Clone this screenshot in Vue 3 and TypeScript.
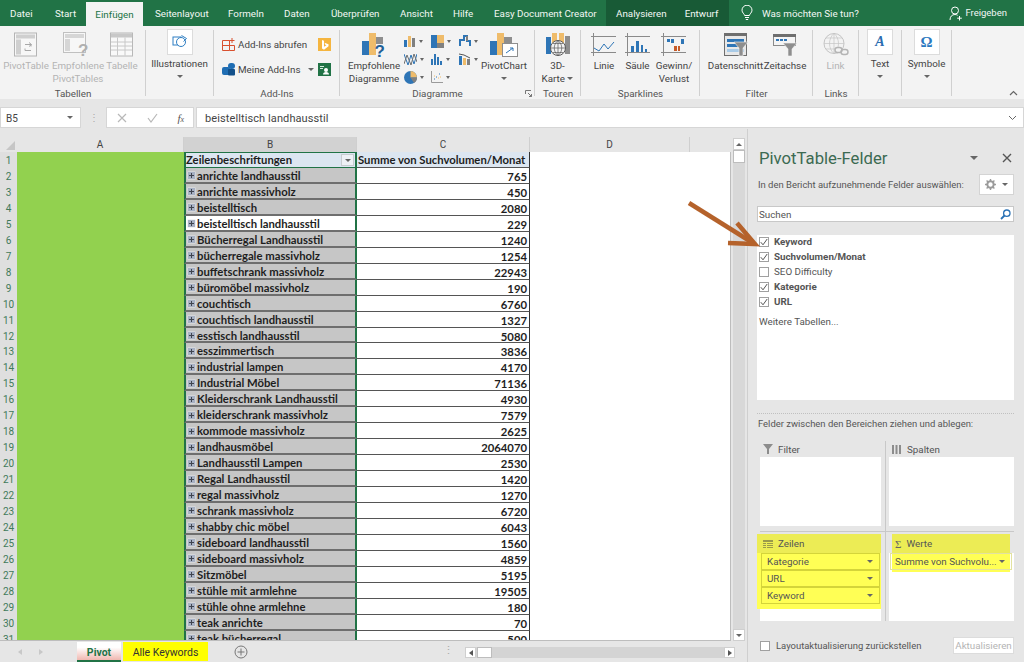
<script setup lang="ts">
interface PivotRow {
  label: string
  value: number
}

const rows: PivotRow[] = [
  { label: "anrichte landhausstil", value: 765 },
  { label: "anrichte massivholz", value: 450 },
  { label: "beistelltisch", value: 2080 },
  { label: "beistelltisch landhausstil", value: 229 },
  { label: "Bücherregal Landhausstil", value: 1240 },
  { label: "bücherregale massivholz", value: 1254 },
  { label: "buffetschrank massivholz", value: 22943 },
  { label: "büromöbel massivholz", value: 190 },
  { label: "couchtisch", value: 6760 },
  { label: "couchtisch landhausstil", value: 1327 },
  { label: "esstisch landhausstil", value: 5080 },
  { label: "esszimmertisch", value: 3836 },
  { label: "industrial lampen", value: 4170 },
  { label: "Industrial Möbel", value: 71136 },
  { label: "Kleiderschrank Landhausstil", value: 4930 },
  { label: "kleiderschrank massivholz", value: 7579 },
  { label: "kommode massivholz", value: 2625 },
  { label: "landhausmöbel", value: 2064070 },
  { label: "Landhausstil Lampen", value: 2530 },
  { label: "Regal Landhausstil", value: 1420 },
  { label: "regal massivholz", value: 1270 },
  { label: "schrank massivholz", value: 6720 },
  { label: "shabby chic möbel", value: 6043 },
  { label: "sideboard landhausstil", value: 1560 },
  { label: "sideboard massivholz", value: 4859 },
  { label: "Sitzmöbel", value: 5195 },
  { label: "stühle mit armlehne", value: 19505 },
  { label: "stühle ohne armlehne", value: 180 },
  { label: "teak anrichte", value: 70 },
  { label: "teak bücherregal", value: 500 },
]

const selectedRow = 5

const tabs = [
  { name: "Datei", cls: "t-datei" },
  { name: "Start", cls: "t-start" },
  { name: "Einfügen", cls: "t-active" },
  { name: "Seitenlayout", cls: "t-seiten" },
  { name: "Formeln", cls: "t-formeln" },
  { name: "Daten", cls: "t-daten" },
  { name: "Überprüfen", cls: "t-ueber" },
  { name: "Ansicht", cls: "t-ansicht" },
  { name: "Hilfe", cls: "t-hilfe" },
  { name: "Easy Document Creator", cls: "t-easy" },
]

const fields = [
  { name: "Keyword", checked: true },
  { name: "Suchvolumen/Monat", checked: true },
  { name: "SEO Difficulty", checked: false },
  { name: "Kategorie", checked: true },
  { name: "URL", checked: true },
]

const rowFields = ["Kategorie", "URL", "Keyword"]
</script>

<template>
  <div class="app">
    <!-- tab strip -->
    <div class="tabbar">
      <div v-for="t in tabs" :key="t.name" class="tab" :class="t.cls">{{ t.name }}</div>
      <div class="context-tabs">
        <span>Analysieren</span>
        <span>Entwurf</span>
      </div>
      <svg class="bulb" width="12" height="16" viewBox="0 0 12 16" fill="none" stroke="#fff" stroke-width="1">
        <path d="M3.6 10.5C3.4 8.8 1 7.8 1 5.2a5 5 0 0 1 10 0c0 2.6-2.4 3.6-2.6 5.3z" />
        <path d="M4 12.500h4M4.800 14.500h2.400" />
      </svg>
      <span class="tell-me">Was möchten Sie tun?</span>
      <div class="share">
        <svg width="14" height="15" viewBox="0 0 14 15" fill="none" stroke="#fff" stroke-width="1">
          <circle cx="6" cy="4.500" r="3.500" />
          <path d="M1 14c0-3.500 2-5.500 5-5.500 1 0 2 .3 2.600 .8M10.500 10v4.500M8.200 12.200h4.600" />
        </svg>
        <span>Freigeben</span>
      </div>
    </div>

    <!-- ribbon -->
    <div class="ribbon">
      <section class="group g-tabellen">
        <div class="group-body">
          <div class="big off w-pivot">
            <svg class="ico" width="24" height="25" viewBox="0 0 24 25">
              <rect x=".5" y=".5" width="22" height="23" fill="#f7f7f7" stroke="#b4b4b4" />
              <rect x="2" y="2" width="19" height="4" fill="#cfcfcf" />
              <rect x="2" y="7" width="5" height="15" fill="#cfcfcf" />
              <path d="M11 12h6v2M17 18h-6v-2M15 10l2.500 2-2.500 2" fill="none" stroke="#a8a8a8" />
            </svg>
            <span>PivotTable</span>
          </div>
          <div class="big off w-empf">
            <svg class="ico tall" width="30" height="32" viewBox="0 0 30 32">
              <rect x=".5" y=".5" width="22" height="20" fill="#f7f7f7" stroke="#c0c0c0" />
              <rect x="2" y="2" width="19" height="4" fill="#d6d6d6" />
              <rect x="2" y="7" width="5" height="12" fill="#d6d6d6" />
              <text x="15" y="24" class="ico-q">?</text>
            </svg>
            <span>Empfohlene<br />PivotTables</span>
          </div>
          <div class="big off w-tabelle">
            <svg class="ico" width="24" height="25" viewBox="0 0 24 25">
              <rect x=".5" y=".5" width="22" height="23" fill="#f9f9f9" stroke="#b8b8b8" />
              <rect x="1" y="1" width="21" height="4" fill="#c8c8c8" />
              <path d="M1 9.500h21M1 13.500h21M1 17.500h21M7.500 5v18M15 5v18" stroke="#c8c8c8" />
            </svg>
            <span>Tabelle</span>
          </div>
        </div>
        <div class="group-label">Tabellen</div>
      </section>

      <section class="group g-illu">
        <div class="group-body">
          <div class="boxed">
            <div class="white-box">
              <svg width="16" height="16" viewBox="0 0 16 16" fill="none" stroke="#2f7fc4" stroke-width="1">
                <rect x="1" y="3" width="8" height="8" />
                <circle cx="9" cy="8" r="4.500" fill="#ffffff" />
                <path d="M9.500 1.500l5 3-3 3" />
              </svg>
            </div>
            <span>Illustrationen</span>
            <i class="caret"></i>
          </div>
        </div>
      </section>

      <section class="group g-addins">
        <div class="group-body addins">
          <div class="addin-row">
            <svg width="14" height="13" viewBox="0 0 14 13" fill="none" stroke="#d9502e" stroke-width="1">
              <path d="M.5 2.500h7v10h-7zM.5 7.500h12v5h-5M7.500 2.500v5M10 0v5M7.500 2.500h5" />
            </svg>
            <span class="addin-text">Add-Ins abrufen</span>
            <div class="store bing">
              <svg width="8" height="10" viewBox="0 0 8 10"><path d="M1 0l2 .7v6l2.500-1.400-1.200-.6-.8-1.900 4 1.400v2L3 9.800 1 8.500z" fill="#fff" /></svg>
            </div>
          </div>
          <div class="addin-row">
            <svg width="14" height="13" viewBox="0 0 14 13">
              <rect x="6" y="0" width="7" height="6" rx="3" fill="#1f6db3" />
              <rect x="0" y="4" width="8" height="8" rx="2" fill="#1f6db3" />
              <rect x="6" y="6" width="7" height="6.500" rx="1" fill="#12508a" />
            </svg>
            <span class="addin-text">Meine Add-Ins</span>
            <i class="caret mini-caret"></i>
            <div class="store people">
              <svg width="9" height="10" viewBox="0 0 9 10">
                <path d="M0 1.500h4M0 3.500h3" stroke="#d8ecdf" />
                <circle cx="6" cy="5" r="2" fill="#fff" />
                <path d="M3 9.500a3 2.500 0 0 1 6 0z" fill="#fff" />
              </svg>
            </div>
          </div>
        </div>
        <div class="group-label">Add-Ins</div>
      </section>

      <section class="group g-charts">
        <div class="group-body">
          <div class="big w-empf-chart">
            <svg class="ico tall" width="27" height="32" viewBox="0 0 27 32">
              <rect x="1" y="9" width="7" height="14" fill="#2e75b6" />
              <rect x="8" y="1" width="7" height="22" fill="#efbc6b" />
              <rect x="15" y="5" width="7" height="7" fill="#8e8e8e" />
              <text x="13.500" y="25" class="ico-qb">?</text>
            </svg>
            <span>Empfohlene<br />Diagramme</span>
          </div>
          <div class="chart-grid">
            <div class="mini">
              <svg width="12" height="11" viewBox="0 0 12 11">
                <rect x="0" y="4" width="3" height="7" fill="#2e75b6" />
                <rect x="4" y="0" width="3" height="11" fill="#efbc6b" />
                <rect x="8" y="2" width="3" height="9" fill="#808080" />
              </svg>
              <i class="caret"></i>
            </div>
            <div class="mini">
              <svg width="13" height="13" viewBox="0 0 13 13">
                <rect x="0" y="0" width="6" height="13" fill="#2e75b6" />
                <rect x="6" y="0" width="7" height="8" fill="#efbc6b" />
                <rect x="6" y="8" width="7" height="5" fill="#808080" />
              </svg>
              <i class="caret"></i>
            </div>
            <div class="mini">
              <svg width="12" height="12" viewBox="0 0 12 12" fill="none">
                <path d="M1 11V5h4V1h3v5h3v5" stroke="#2e75b6" stroke-width="2" />
                <path d="M8 1v5" stroke="#808080" stroke-width="2" />
              </svg>
              <i class="caret"></i>
            </div>
            <div class="mini">
              <svg width="13" height="13" viewBox="0 0 13 13" fill="none" stroke-width="1">
                <path d="M0 1l4 11 3-10 3 9 3-10" stroke="#2e75b6" />
                <path d="M0 11l3-9 4 10 3-11 3 8" stroke="#707070" />
              </svg>
              <i class="caret"></i>
            </div>
            <div class="mini">
              <svg width="12" height="11" viewBox="0 0 12 11" fill="#2e75b6">
                <rect x="0" y="5" width="2" height="6" />
                <rect x="3" y="0" width="2" height="11" />
                <rect x="6" y="3" width="2" height="8" />
                <rect x="9" y="7" width="2" height="4" />
              </svg>
              <i class="caret"></i>
            </div>
            <div class="mini">
              <svg width="12" height="12" viewBox="0 0 12 12">
                <rect x="0" y="3" width="3" height="9" fill="#2e75b6" />
                <rect x="4" y="5" width="3" height="7" fill="#efbc6b" />
                <rect x="8" y="6" width="3" height="6" fill="#808080" />
                <path d="M0 1l5 1 6 3" stroke="#555" fill="none" />
              </svg>
              <i class="caret"></i>
            </div>
            <div class="mini">
              <svg width="13" height="13" viewBox="0 0 13 13">
                <circle cx="6.500" cy="6.500" r="6.500" fill="#2e75b6" />
                <path d="M6.500 6.500V0a6.500 6.500 0 0 1 6.500 6.500z" fill="#efbc6b" />
                <path d="M6.500 6.500H13a6.500 6.500 0 0 1-3 5.500z" fill="#808080" />
              </svg>
              <i class="caret"></i>
            </div>
            <div class="mini">
              <svg width="12" height="12" viewBox="0 0 12 12" fill="none">
                <path d="M.5 0v11.500H12" stroke="#9a9a9a" />
                <path d="M3 8h1M5 6h1M8 3h1" stroke="#2e75b6" />
                <path d="M3 5h1M7 7h1M9 6h1" stroke="#efbc6b" />
              </svg>
              <i class="caret"></i>
            </div>
          </div>
          <div class="big w-pivotchart">
            <svg class="ico" width="30" height="26" viewBox="0 0 30 26">
              <rect x="1" y="9" width="7" height="14" fill="#2e75b6" />
              <rect x="8" y="1" width="7" height="22" fill="#efbc6b" />
              <rect x="15" y="5" width="8" height="7" fill="#8e8e8e" />
              <rect x="13.500" y="11.500" width="15" height="13" fill="#fff" stroke="#8e8e8e" />
              <path d="M17 21l7-5M21 16h3v3" stroke="#2e75b6" fill="none" />
            </svg>
            <span>PivotChart</span>
            <i class="caret"></i>
          </div>
        </div>
        <div class="group-label">Diagramme</div>
        <svg class="launcher" width="7" height="7" viewBox="0 0 7 7" fill="none" stroke="#777">
          <path d="M.5 4V.5H6M3 3l3.500 3.500M6.500 4v2.500H4" />
        </svg>
      </section>

      <section class="group g-touren">
        <div class="group-body">
          <div class="big w-karte">
            <svg class="ico" width="26" height="24" viewBox="0 0 26 24">
              <rect x="1" y="4" width="5" height="17" fill="#2e75b6" />
              <rect x="7" y="0" width="5" height="10" fill="#efbc6b" />
              <rect x="14" y="0" width="5" height="10" fill="#efbc6b" />
              <rect x="20" y="3" width="5" height="18" fill="#8e8e8e" />
              <circle cx="13" cy="15" r="7.500" fill="#f3f3f3" stroke="#5a5a5a" />
              <path d="M5.500 15h15M13 7.500v15M8 10.500h10M8 19.500h10M13 7.500c-5 4-5 11 0 15M13 7.500c5 4 5 11 0 15" stroke="#5a5a5a" fill="none" stroke-width=".7" />
            </svg>
            <span>3D-<br />Karte <i class="caret inline"></i></span>
          </div>
        </div>
        <div class="group-label">Touren</div>
      </section>

      <section class="group g-spark">
        <div class="group-body">
          <div class="big w-spark">
            <svg class="ico" width="26" height="24" viewBox="0 0 26 24" fill="none">
              <path d="M0 3.500h25M0 19.500h25M2.500 0v23" stroke="#8a8a8a" />
              <path d="M3 15l5 3 5-7 4 5 6-7" stroke="#2e75b6" />
            </svg>
            <span>Linie</span>
          </div>
          <div class="big w-spark2">
            <svg class="ico" width="26" height="24" viewBox="0 0 26 24" fill="none">
              <path d="M0 3.500h25M0 19.500h25M2.500 0v23" stroke="#8a8a8a" />
              <path d="M6 19V13h3v6zM11 19V8h3v11zM16 19v-7h2v7zM20 19v-3h2v3z" fill="#2e75b6" />
            </svg>
            <span>Säule</span>
          </div>
          <div class="big w-spark3">
            <svg class="ico" width="26" height="24" viewBox="0 0 26 24" fill="none">
              <path d="M0 3.500h25M0 19.500h25M2.500 0v23" stroke="#8a8a8a" />
              <path d="M6 6h3v3H6zM10 6h3v4h-3zM20 6h3v5h-3z" fill="#2e75b6" />
              <path d="M13 13h3v5h-3zM17 13h2v5h-2z" fill="#c55a28" />
            </svg>
            <span>Gewinn/<br />Verlust</span>
          </div>
        </div>
        <div class="group-label">Sparklines</div>
      </section>

      <section class="group g-filter">
        <div class="group-body">
          <div class="big w-schnitt">
            <svg class="ico" width="24" height="24" viewBox="0 0 24 24">
              <rect x=".5" y=".5" width="22" height="22" fill="#e8e8e8" stroke="#6e6e6e" />
              <rect x="0" y="0" width="23" height="3" fill="#6e6e6e" />
              <rect x="3" y="6" width="17" height="3" fill="#2e75b6" />
              <rect x="3" y="11" width="17" height="3" fill="#2e75b6" />
              <rect x="3" y="16" width="17" height="3" fill="#a9cbe7" />
              <path d="M10 9h14l-5 6v8h-4v-8z" fill="#8e8e8e" stroke="#f3f3f3" stroke-width=".6" />
            </svg>
            <span>Datenschnitt</span>
          </div>
          <div class="big w-zeit">
            <svg class="ico" width="24" height="24" viewBox="0 0 24 24">
              <rect x=".5" y="1.500" width="22" height="11" fill="#f4f4f4" stroke="#8a8a8a" />
              <rect x="0" y="1" width="23" height="3" fill="#6e6e6e" />
              <path d="M3 7h3M7 7h3M11 7h3" stroke="#2e75b6" stroke-width="2" />
              <path d="M10 10h14l-5 6v7h-4v-7z" fill="#8e8e8e" stroke="#f3f3f3" stroke-width=".6" />
            </svg>
            <span>Zeitachse</span>
          </div>
        </div>
        <div class="group-label">Filter</div>
      </section>

      <section class="group g-links">
        <div class="group-body">
          <div class="big off w-link">
            <svg class="ico" width="26" height="25" viewBox="0 0 26 25" fill="none" stroke="#c4c4c4">
              <circle cx="11" cy="11" r="10" />
              <path d="M1 11h20M11 1v20M3 5.500h16M3 16.500h16M11 1c-6 5-6 15 0 20M11 1c6 5 6 15 0 20" stroke-width=".7" />
              <rect x="12" y="15" width="7" height="5" rx="2.500" fill="#f3f3f3" stroke="#b4b4b4" stroke-width="1.400" />
              <rect x="18" y="17" width="7" height="5" rx="2.500" fill="none" stroke="#b4b4b4" stroke-width="1.400" />
            </svg>
            <span>Link</span>
          </div>
        </div>
        <div class="group-label">Links</div>
      </section>

      <section class="group g-text">
        <div class="group-body">
          <div class="boxed">
            <div class="white-box"><b class="box-a">A</b></div>
            <span>Text</span>
            <i class="caret"></i>
          </div>
        </div>
      </section>

      <section class="group g-symbole">
        <div class="group-body">
          <div class="boxed">
            <div class="white-box"><b class="box-o">Ω</b></div>
            <span>Symbole</span>
            <i class="caret"></i>
          </div>
        </div>
      </section>

      <svg class="collapse" width="9" height="6" viewBox="0 0 9 6" fill="none" stroke="#666" stroke-width="1.200">
        <path d="M1 5l3.500-3.500L8 5" />
      </svg>
    </div>

    <!-- formula bar -->
    <div class="formula">
      <div class="namebox"><span class="nudge">B5</span><i class="caret"></i></div>
      <span class="fdots">⋮</span>
      <div class="fbuttons">
        <svg width="10" height="10" viewBox="0 0 10 10" stroke="#b8b8b8" stroke-width="1.200"><path d="M1 1l8 8M9 1l-8 8" /></svg>
        <svg width="11" height="10" viewBox="0 0 11 10" stroke="#b8b8b8" stroke-width="1.200" fill="none"><path d="M1 5l3 4 6-8" /></svg>
        <i class="fx">f<small>x</small></i>
      </div>
      <div class="finput">
        <span class="nudge">beistelltisch landhausstil</span>
        <svg width="9" height="6" viewBox="0 0 9 6" fill="none" stroke="#666"><path d="M1 1l3.500 3.500L8 1" /></svg>
      </div>
    </div>

    <div class="workspace">
      <div class="sheet-side">
        <div class="sheet-row">
          <div class="sheet">
            <div class="col-head">
              <div class="corner"><i></i></div>
              <div class="ch ch-a">A</div>
              <div class="ch ch-b">B</div>
              <div class="ch ch-c">C</div>
              <div class="ch ch-d">D</div>
            </div>
            <div class="cells">
              <div class="row row-head">
                <div class="rn">1</div>
                <div class="ca"></div>
                <div class="cb head">
                  <span>Zeilenbeschriftungen</span>
                  <span class="filter-btn"><i class="caret"></i></span>
                </div>
                <div class="cc head">Summe von Suchvolumen/Monat</div>
              </div>
              <div v-for="(r, i) in rows" :key="r.label" class="row">
                <div class="rn">{{ i + 2 }}</div>
                <div class="ca"></div>
                <div class="cb" :class="{ picked: i + 2 === selectedRow }">
                  <span class="expand"></span>{{ r.label }}
                </div>
                <div class="cc">{{ r.value }}</div>
              </div>
            </div>
          </div>
          <div class="vscroll">
            <div class="sb-btn"><i class="caret up"></i></div>
            <div class="sb-thumb"></div>
            <div class="sb-track"></div>
            <div class="sb-btn"><i class="caret"></i></div>
          </div>
        </div>
        <div class="sheet-tabs">
          <div class="nav"><i class="tri left"></i><i class="tri right"></i></div>
          <div class="stab pivot">Pivot</div>
          <div class="stab keywords">Alle Keywords</div>
          <svg class="add" width="14" height="14" viewBox="0 0 14 14" fill="none" stroke="#777">
            <circle cx="7" cy="7" r="6" />
            <path d="M7 3.500v7M3.500 7h7" />
          </svg>
          <span class="tab-dots">⋮</span>
          <div class="hscroll">
            <div class="hs-btn"><i class="tri left dark"></i></div>
            <div class="hs-thumb"></div>
            <div class="hs-track"></div>
            <div class="hs-btn"><i class="tri right dark"></i></div>
          </div>
        </div>
      </div>

      <aside class="panel">
        <div class="panel-title">
          <span>PivotTable-Felder</span>
          <i class="caret big-caret"></i>
          <svg width="10" height="10" viewBox="0 0 10 10" stroke="#555" stroke-width="1.400"><path d="M1 1l8 8M9 1l-8 8" /></svg>
        </div>
        <div class="panel-choose">
          <span>In den Bericht aufzunehmende Felder auswählen:</span>
          <div class="gear-btn">
            <svg width="11" height="11" viewBox="0 0 11 11">
              <circle cx="5.500" cy="5.500" r="3.200" fill="none" stroke="#9a9a9a" stroke-width="2" />
              <path d="M5.500 0v2M5.500 9v2M0 5.500h2M9 5.500h2M1.600 1.600L3 3M8 8l1.400 1.400M9.400 1.600L8 3M3 8L1.600 9.400" stroke="#9a9a9a" stroke-width="1.400" />
            </svg>
            <i class="caret"></i>
          </div>
        </div>
        <div class="search">
          <span>Suchen</span>
          <svg width="11" height="11" viewBox="0 0 11 11" fill="none" stroke="#2a72b5" stroke-width="1.300">
            <circle cx="6.800" cy="4.200" r="3.200" />
            <path d="M4.500 6.500L1 10" stroke-width="1.800" />
          </svg>
        </div>
        <div class="field-list">
          <label v-for="f in fields" :key="f.name" class="field" :class="{ on: f.checked }">
            <span class="check">
              <svg v-if="f.checked" width="8" height="8" viewBox="0 0 8 8" fill="none" stroke="#555"><path d="M.8 4.200l2.200 2.600L7.200 1" /></svg>
            </span>
            {{ f.name }}
          </label>
          <div class="more">Weitere Tabellen...</div>
        </div>
        <div class="dots"></div>
        <div class="drag-hint">Felder zwischen den Bereichen ziehen und ablegen:</div>

        <div class="zones">
          <div class="zone">
            <div class="zone-head">
              <svg width="10" height="10" viewBox="0 0 10 10" fill="#8c8c8c"><path d="M0 0h10L6 5v5H4V5z" /></svg>
              Filter
            </div>
            <div class="zone-box"></div>
          </div>
          <div class="zone">
            <div class="zone-head">
              <svg width="10" height="9" viewBox="0 0 10 9" fill="#8c8c8c"><path d="M0 0h2v9H0zM3.500 0h2v9h-2zM7 0h2v9H7z" /></svg>
              Spalten
            </div>
            <div class="zone-box"></div>
          </div>
          <div class="zone lower">
            <div class="marked">
              <div class="zone-head">
                <svg width="10" height="8" viewBox="0 0 10 8" fill="#9a9a4a"><path d="M0 0h10v2H0zM0 3h3v1H0zM4 3h6v1H4zM0 5h3v1H0zM4 5h6v1H4zM0 7h3v1H0zM4 7h6v1H4z" /></svg>
                Zeilen
              </div>
              <div class="marked-items">
                <div v-for="f in rowFields" :key="f" class="pill">{{ f }}<i class="caret"></i></div>
              </div>
            </div>
            <div class="zone-rest"></div>
          </div>
          <div class="zone lower">
            <div class="zone-head werte-head">
              <span class="sigma">Σ</span>
              Werte
            </div>
            <div class="werte-box">
              <div class="pill werte-pill"><span>Summe von Suchvolu...</span><i class="caret"></i></div>
            </div>
          </div>
        </div>

        <div class="panel-foot">
          <span class="check"></span>
          <span class="defer">Layoutaktualisierung zurückstellen</span>
          <button class="refresh" type="button" disabled>Aktualisieren</button>
        </div>
      </aside>
    </div>

    <!-- annotation over the sheet -->
    <svg class="arrow" width="80" height="55" viewBox="0 0 80 55" fill="none" stroke="#b5622b" stroke-width="4.500">
      <path d="M2 2l64 40" />
      <path d="M50 22l18 21-27 -1" />
    </svg>
  </div>
</template>

<style>
html,
body {
  margin: 0;
  background: #e6e6e6;
}
</style>

<style scoped>
.app {
  position: relative;
  width: 1024px;
  height: 662px;
  overflow: hidden;
  background: #e6e6e6;
  font-family: Roboto, "Open Sans", sans-serif;
  font-size: 9.800px;
  color: #444;
  display: flex;
  flex-direction: column;
}

.caret {
  display: inline-block;
  width: 0;
  height: 0;
  border-left: 3px solid transparent;
  border-right: 3px solid transparent;
  border-top: 3px solid #666;
}

.caret.up {
  border-top: 0;
  border-bottom: 3px solid #666;
}

/* tab strip */
.tabbar {
  height: 26px;
  flex: none;
  background: #217346;
  color: #f2f7f4;
  display: flex;
  align-items: stretch;
  line-height: 28px;
}

.tab {
  white-space: nowrap;
  box-sizing: border-box;
}

.t-datei { width: 55px; padding-left: 10px; }
.t-start { width: 31px; }
.t-active {
  width: 57px;
  margin-top: 2px;
  background: #f3f3f3;
  color: #217346;
  text-align: center;
  line-height: 25px;
}
.t-seiten { width: 85px; padding-left: 12px; }
.t-formeln { width: 56px; }
.t-daten { width: 47px; }
.t-ueber { width: 69px; }
.t-ansicht { width: 53px; }
.t-hilfe { width: 41px; }
.t-easy { width: 112px; }

.context-tabs {
  width: 123px;
  background: #185a36;
  display: flex;
  gap: 18px;
  padding-left: 10px;
  box-sizing: border-box;
  white-space: nowrap;
}

.bulb {
  margin: 5px 0 0 12px;
}

.tell-me {
  margin-left: 9px;
  white-space: nowrap;
}

.share {
  margin-left: auto;
  margin-right: 17px;
  display: flex;
  align-items: center;
  gap: 2px;
  font-size: 9.500px;
}

/* ribbon */
.ribbon {
  position: relative;
  height: 73px;
  flex: none;
  background: #f3f3f3;
  display: flex;
}

.group {
  position: relative;
  box-sizing: border-box;
  flex: none;
  display: flex;
  flex-direction: column;
  padding-top: 3px;
}

.group::after {
  content: "";
  position: absolute;
  right: 0;
  top: 4px;
  bottom: 3px;
  width: 1px;
  background: #d0d0d0;
}

.g-tabellen { width: 146px; }
.g-illu { width: 68px; }
.g-addins { width: 126px; }
.g-charts { width: 195px; }
.g-touren { width: 46px; }
.g-spark { width: 119px; }
.g-filter { width: 113px; }
.g-links { width: 46px; }
.g-text { width: 43px; }
.g-symbole { width: 50px; }

.group-body {
  flex: 1;
  display: flex;
  min-height: 0;
}

.group-label {
  height: 14px;
  line-height: 17px;
  text-align: center;
  color: #555;
  flex: none;
}

.big {
  display: flex;
  flex-direction: column;
  align-items: center;
  text-align: center;
  line-height: 13px;
  white-space: nowrap;
  flex: none;
}

.big .ico {
  height: 26px;
  margin: 3px 0 1px;
  flex: none;
}

.big .ico.tall {
  height: 32px;
  margin-bottom: -5px;
}

.big.off {
  color: #b4b4b4;
}

.big > .caret {
  margin-top: 5px;
}

.caret.inline {
  vertical-align: 2px;
}

.ico-q {
  font: 700 17px "Liberation Sans", sans-serif;
  fill: #b0b0b0;
}

.ico-qb {
  font: 700 17px "Liberation Sans", sans-serif;
  fill: #1f5f96;
}

.w-pivot { width: 52px; }
.w-empf { width: 52px; }
.w-tabelle { width: 36px; }
.w-empf-chart { width: 60px; margin-left: 4px; }
.w-pivotchart { width: 50px; }
.w-karte { width: 45px; }
.w-spark { width: 36px; margin-left: 5px; }
.w-spark2 { width: 31px; }
.w-spark3 { width: 42px; }
.w-schnitt { width: 57px; margin-left: 7px; }
.w-zeit { width: 42px; }
.w-link { width: 45px; }

.boxed {
  width: 100%;
  padding-right: 1px;
  box-sizing: border-box;
  display: flex;
  flex-direction: column;
  align-items: center;
  line-height: 13px;
  white-space: nowrap;
}

.white-box {
  width: 24px;
  height: 24px;
  background: #fff;
  border: 1px solid #dcdcdc;
  display: flex;
  align-items: center;
  justify-content: center;
  margin-bottom: 2px;
}

.boxed .caret {
  margin-top: 5px;
}

.box-a {
  color: #2a6cb0;
  font: italic 700 14px "Liberation Serif", serif;
}

.box-o {
  color: #2a78c0;
  font: 700 15px "Liberation Serif", serif;
}

.addins {
  flex-direction: column;
  padding: 9px 0 0 8px;
  gap: 12px;
}

.addin-row {
  display: flex;
  align-items: center;
  height: 13px;
  white-space: nowrap;
}

.addin-text {
  margin-left: 2px;
  color: #444;
}

.store {
  width: 13px;
  height: 13px;
  display: flex;
  align-items: center;
  justify-content: center;
  position: absolute;
  left: 104px;
}

.bing { background: #f5b53f; }
.people { background: #217346; }

.mini-caret {
  position: absolute;
  left: 94px;
}

.chart-grid {
  width: 75px;
  padding-top: 3px;
  flex: none;
  display: grid;
  grid-template-columns: 27px 28px 20px;
  grid-auto-rows: 18px;
}

.mini {
  display: flex;
  align-items: center;
  gap: 3px;
}

.mini .caret {
  border-left-width: 2.500px;
  border-right-width: 2.500px;
}

.launcher {
  position: absolute;
  right: 3px;
  bottom: 2px;
}

.collapse {
  position: absolute;
  right: 6px;
  bottom: 3px;
}

/* formula bar */
.formula {
  height: 30px;
  flex: none;
  box-sizing: border-box;
  padding-top: 8px;
  display: flex;
  background: #e6e6e6;
}

.namebox,
.fbuttons,
.finput {
  height: 21px;
  background: #fff;
  box-sizing: border-box;
  display: flex;
  align-items: center;
  border: 1px solid #d6d6d6;
}

.nudge {
  padding-top: 1px;
}

.namebox {
  width: 81px;
  padding: 0 7px 0 5px;
  justify-content: space-between;
  font-size: 10px;
}

.fdots {
  width: 25px;
  text-align: center;
  line-height: 21px;
  color: #aaa;
  font-size: 10px;
}

.fbuttons {
  width: 88px;
  padding: 0 9px 0 10px;
  justify-content: space-between;
}

.fx {
  font: italic 11px "Liberation Serif", serif;
  color: #555;
}

.fx small {
  font-size: 8px;
}

.finput {
  width: 828px;
  margin-left: 2px;
  padding: 0 6px 0 8px;
  justify-content: space-between;
  font-size: 11px;
  letter-spacing: .1px;
}

/* sheet */
.workspace {
  flex: 1;
  min-height: 0;
  display: flex;
}

.sheet-side {
  width: 747px;
  flex: none;
  display: flex;
  flex-direction: column;
}

.sheet-row {
  flex: 1;
  min-height: 0;
  display: flex;
  padding-top: 8px;
}

.sheet {
  width: 731px;
  flex: none;
  overflow: hidden;
  border-bottom: 1px solid #bdbdbd;
  box-sizing: border-box;
  display: flex;
  flex-direction: column;
  font-family: Lato, "Open Sans", sans-serif;
}

.col-head {
  display: flex;
  height: 15px;
  flex: none;
  font-size: 10px;
  line-height: 15px;
  text-align: center;
  color: #444;
  font-family: Roboto, sans-serif;
}

.corner {
  width: 17px;
  position: relative;
}

.corner i {
  position: absolute;
  right: 2px;
  bottom: 2px;
  width: 0;
  height: 0;
  border-left: 9px solid transparent;
  border-bottom: 9px solid #c6c6c6;
}

.ch {
  box-sizing: border-box;
  border-right: 1px solid #cfcfcf;
  background: #e6e6e6;
}

.ch-a { width: 167px; }
.ch-b { width: 173px; background: #d2d2d2; }
.ch-c { width: 173px; }
.ch-d { width: 160px; }

.cells {
  flex: 1;
  min-height: 0;
  background: #fff;
  border-right: 1px solid #bdbdbd;
}

.row {
  height: 15.960px;
  display: flex;
  font-size: 11.300px;
  line-height: 16px;
  font-weight: 700;
  color: #1e1e1e;
}

.row-head {
  height: 16px;
}

.rn {
  width: 17px;
  flex: none;
  background: #dfdfdf;
  box-sizing: border-box;
  text-align: center;
  color: #3f7a5a;
  font: 400 10px/17px Roboto, sans-serif;
}

.ca {
  width: 167px;
  flex: none;
  background: #92d14f;
}

.cb {
  width: 173px;
  flex: none;
  box-sizing: border-box;
  background: #c6c6c6;
  border-left: 2px solid #217346;
  border-right: 2px solid #217346;
  border-bottom: 2px solid #6e6e6e;
  padding: 2px 0 0 2px;
  display: flex;
  align-items: center;
  white-space: nowrap;
}

.cb.picked {
  background: #fff;
}

.cb.head {
  background: #dce6f1;
  padding: 0;
  justify-content: space-between;
  border-top: 1px solid #217346;
  border-bottom-width: 1px;
  border-bottom-color: #217346;
}

.filter-btn {
  width: 13px;
  height: 12px;
  background: #eef1f5;
  border: 1px solid #c8ccd0;
  box-sizing: border-box;
  display: flex;
  align-items: center;
  justify-content: center;
  margin-right: 1px;
}

.expand {
  width: 7px;
  height: 7px;
  margin-right: 2px;
  flex: none;
  background:
    linear-gradient(#3f4450, #3f4450) center / 5px 1px no-repeat,
    linear-gradient(#3f4450, #3f4450) center / 1px 5px no-repeat,
    #a7b1c4;
  box-shadow: 0 0 0 .5px #e4e6ea;
}

.cc {
  width: 173px;
  flex: none;
  box-sizing: border-box;
  background: #fff;
  border-right: 1px solid #333;
  border-bottom: 1px solid #555;
  text-align: right;
  padding: 1px 2px 0 0;
  white-space: nowrap;
}

.cc.head {
  background: #dce6f1;
  text-align: left;
  padding: 0 0 0 1px;
}

.vscroll {
  width: 16px;
  flex: none;
  padding: 1px 2px 0;
  box-sizing: border-box;
  display: flex;
  flex-direction: column;
}

.sb-btn {
  height: 12px;
  background: #fff;
  border: 1px solid #cfcfcf;
  box-sizing: border-box;
  display: flex;
  align-items: center;
  justify-content: center;
  flex: none;
}

.sb-thumb {
  height: 13px;
  background: #fff;
  border: 1px solid #bdbdbd;
  box-sizing: border-box;
  flex: none;
}

.sb-track {
  flex: 1;
  background: #d8d8d8;
}

/* sheet tabs */
.sheet-tabs {
  height: 21px;
  flex: none;
  display: flex;
  align-items: flex-start;
  font-size: 10.500px;
}

.nav {
  width: 77px;
  height: 21px;
  display: flex;
  align-items: center;
  gap: 17px;
  padding-left: 18px;
  box-sizing: border-box;
}

.tri {
  display: inline-block;
  width: 0;
  height: 0;
  border-top: 3px solid transparent;
  border-bottom: 3px solid transparent;
}

.tri.left { border-right: 4px solid #c8c8c8; }
.tri.right { border-left: 4px solid #c8c8c8; }
.tri.left.dark { border-right-color: #555; }
.tri.right.dark { border-left-color: #555; }

.stab {
  margin-top: 1px;
  height: 19px;
  line-height: 21px;
  text-align: center;
  box-sizing: border-box;
}

.pivot {
  width: 44px;
  font-weight: 700;
  color: #217346;
  background: linear-gradient(#ffffff 30%, #f0b7b0);
  border-bottom: 2px solid #217346;
  height: 20px;
}

.keywords {
  width: 85px;
  margin-left: 2px;
  background: #ffff00;
  color: #333;
}

.add {
  margin: 4px 0 0 26px;
}

.tab-dots {
  width: 206px;
  text-align: right;
  line-height: 20px;
  color: #aaa;
}

.hscroll {
  width: 270px;
  height: 11px;
  margin: 6px 0 0 11px;
  flex: none;
  display: flex;
  background: #d4d4d4;
}

.hs-btn {
  width: 11px;
  background: #fff;
  border: 1px solid #cfcfcf;
  box-sizing: border-box;
  display: flex;
  align-items: center;
  justify-content: center;
}

.hs-thumb {
  width: 15px;
  margin-left: 1px;
  background: #fff;
  border: 1px solid #bdbdbd;
  box-sizing: border-box;
}

.hs-track {
  flex: 1;
}

/* pivot field panel */
.panel {
  width: 277px;
  flex: none;
  box-sizing: border-box;
  border-left: 1px solid #cfcfcf;
  padding: 0 10px 0 9px;
  display: flex;
  flex-direction: column;
  color: #555;
}

.panel-title {
  height: 24px;
  margin-top: 17px;
  display: flex;
  align-items: center;
  font-size: 16.700px;
  color: #3c6a52;
  padding-left: 2px;
}

.panel-title span {
  flex: 1;
}

.big-caret {
  border-left-width: 4px;
  border-right-width: 4px;
  border-top-width: 4px;
  margin-right: 24px;
}

.panel-title svg {
  margin-right: 2px;
}

.panel-choose {
  height: 21px;
  margin-top: 4px;
  display: flex;
  align-items: center;
  justify-content: space-between;
  padding-left: 1px;
  font-size: 9.450px;
}

.gear-btn {
  width: 35px;
  height: 21px;
  background: #fff;
  border: 1px solid #d4d4d4;
  box-sizing: border-box;
  display: flex;
  align-items: center;
  justify-content: center;
  gap: 6px;
}

.search {
  height: 16px;
  margin-top: 11px;
  background: #fff;
  border: 1px solid #c8c8c8;
  box-sizing: border-box;
  display: flex;
  align-items: center;
  justify-content: space-between;
  padding: 0 2px 0 1px;
}

.field-list {
  height: 165px;
  margin-top: 13px;
  background: #fff;
  box-sizing: border-box;
  display: flex;
  flex-direction: column;
}

.field {
  height: 15px;
  display: flex;
  align-items: center;
  gap: 5px;
  padding-left: 2px;
  white-space: nowrap;
  flex: none;
}

.field:first-child {
  margin-top: -1px;
}

.field.on {
  font-weight: 700;
}

.check {
  width: 10px;
  height: 10px;
  box-sizing: border-box;
  background: #fff;
  border: 1px solid #a0a0a0;
  display: flex;
  align-items: center;
  justify-content: center;
  flex: none;
}

.more {
  margin: 7px 0 0 2px;
}

.dots {
  height: 0;
  margin-top: 13px;
  border-top: 1px dotted #c0c0c0;
}

.drag-hint {
  margin-top: 3px;
  height: 14px;
  line-height: 14px;
  padding-left: 1px;
  font-size: 9.450px;
}

.zones {
  margin: 10px 0 0 3px;
  display: grid;
  grid-template-columns: 121px 125px;
  grid-template-rows: 90px 90px;
  column-gap: 8px;
  position: relative;
}

.zones::before {
  content: "";
  position: absolute;
  left: 125px;
  top: 0;
  bottom: 0;
  width: 1px;
  background: #c8c8c8;
}

.zones::after {
  content: "";
  position: absolute;
  left: 0;
  right: 0;
  top: 90px;
  height: 1px;
  background: #c8c8c8;
}

.zone {
  display: flex;
  flex-direction: column;
  min-height: 0;
}

.zone.lower {
  padding-top: 5px;
  margin-top: -2px;
}

.zone-head {
  height: 16px;
  display: flex;
  align-items: center;
  gap: 5px;
  padding-left: 3px;
  flex: none;
}

.zone-box {
  flex: 1;
  background: #fff;
  margin-bottom: 5px;
}

.marked {
  margin-left: -3px;
  background: #ecec55;
  flex: none;
  position: relative;
  z-index: 1;
}

.marked .zone-head {
  height: 19px;
  padding-left: 6px;
}

.marked-items {
  background: #ffff55;
  padding: 0 1px 5px 4px;
  display: flex;
  flex-direction: column;
}

.pill {
  height: 17px;
  box-sizing: border-box;
  border: 1px solid #d4d43a;
  background: #ffff55;
  display: flex;
  align-items: center;
  justify-content: space-between;
  padding: 0 6px 0 5px;
  white-space: nowrap;
}

.zone-rest {
  flex: 1;
  background: #fff;
}

.werte-head {
  height: 19px;
  background: #ecec55;
  margin: 0 4px 0 3px;
  position: relative;
  z-index: 1;
}

.werte-box {
  flex: 1;
  background: linear-gradient(#ffff55, #ffff55) 3px 0 / 118px 19px no-repeat, #fff;
}

.werte-pill {
  margin: 0 2px 0 1px;
  background: none;
  border-color: #e2e2a0;
  padding-left: 4px;
}

.sigma {
  font: 11px "Liberation Serif", serif;
  color: #666;
}

.panel-foot {
  margin-top: 16px;
  height: 17px;
  display: flex;
  align-items: center;
  padding-left: 3px;
}

.defer {
  margin-left: 6px;
  font-size: 9.450px;
}

.refresh {
  margin-left: auto;
  width: 61px;
  height: 17px;
  padding: 0;
  background: #fff;
  border: 1px solid #dcdcdc;
  color: #b4b4b4;
  font: inherit;
}

.arrow {
  position: absolute;
  left: 687px;
  top: 201px;
}
</style>
